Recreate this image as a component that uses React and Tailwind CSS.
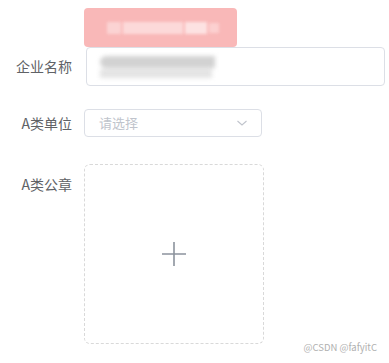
import React from 'react'

const Label = ({ children, className = '' }) => (
  <div className={`w-[72px] shrink-0 text-right text-[14px] text-[#606266] ${className}`}>{children}</div>
)

const Chevron = () => (
  <svg width="12" height="12" viewBox="0 0 12 12" fill="none" stroke="#c0c4cc" strokeWidth="1.1">
    <path d="M1.5 4 L6 8 L10.5 4" />
  </svg>
)

const Plus = () => (
  <svg width="24" height="24" viewBox="0 0 24 24" stroke="#8c939d" strokeWidth="1.6">
    <path d="M0 12 H24 M12 0 V24" />
  </svg>
)

export default function App() {
  return (
    <div
      className="relative w-[389px] h-[363px] overflow-hidden bg-white"
      style={{ fontFamily: '"Noto Sans CJK SC", "Noto Sans", sans-serif' }}
    >
      <div className="flex flex-col pt-[8px]">
        {/* blurred pink banner */}
        <div className="ml-[84px] w-[153px] h-[39px] rounded-[4px] bg-[#f9b8b8] flex items-center pl-[23px]">
          <div className="flex items-center gap-[2px] blur-[1.5px]">
            <div className="w-[14px] h-[12px] bg-[#fbd3d3]" />
            <div className="w-[60px] h-[12px] bg-[#fcd9d9]" />
            <div className="w-[22px] h-[12px] bg-[#fde2e2]" />
            <div className="w-[10px] h-[10px] bg-[#fcd0d0]" />
          </div>
        </div>

        {/* 企业名称 */}
        <div className="flex items-center">
          <Label>企业名称</Label>
          <div className="ml-[14px] w-[299px] h-[39px] rounded-[4px] border border-[#dcdfe6] flex items-center pl-[13px]">
            <div className="flex flex-col gap-[1px] blur-[2px]">
              <div className="w-[115px] h-[12px] rounded-l-full bg-[#d2d2d2]" />
              <div className="w-[112px] h-[9px] bg-[#e4e4e4]" />
            </div>
          </div>
        </div>

        {/* A类单位 */}
        <div className="flex items-center mt-[23px]">
          <Label>A类单位</Label>
          <div className="ml-[12px] w-[178px] h-[28px] rounded-[4px] border border-[#dcdfe6] flex items-center justify-between pl-[14px] pr-[13px]">
            <span className="text-[13px] text-[#c0c4cc]">请选择</span>
            <Chevron />
          </div>
        </div>

        {/* A类公章 */}
        <div className="flex items-start mt-[27px]">
          <Label className="pt-[10px]">A类公章</Label>
          <div className="ml-[12px] w-[180px] h-[180px] rounded-[6px] border border-dashed border-[#d9d9d9] flex items-center justify-center">
            <Plus />
          </div>
        </div>
      </div>

      <div className="absolute right-[12px] bottom-[11px] text-[9.5px] text-[#b0b0b0] leading-none">
        @CSDN @fafyitC
      </div>
    </div>
  )
}
